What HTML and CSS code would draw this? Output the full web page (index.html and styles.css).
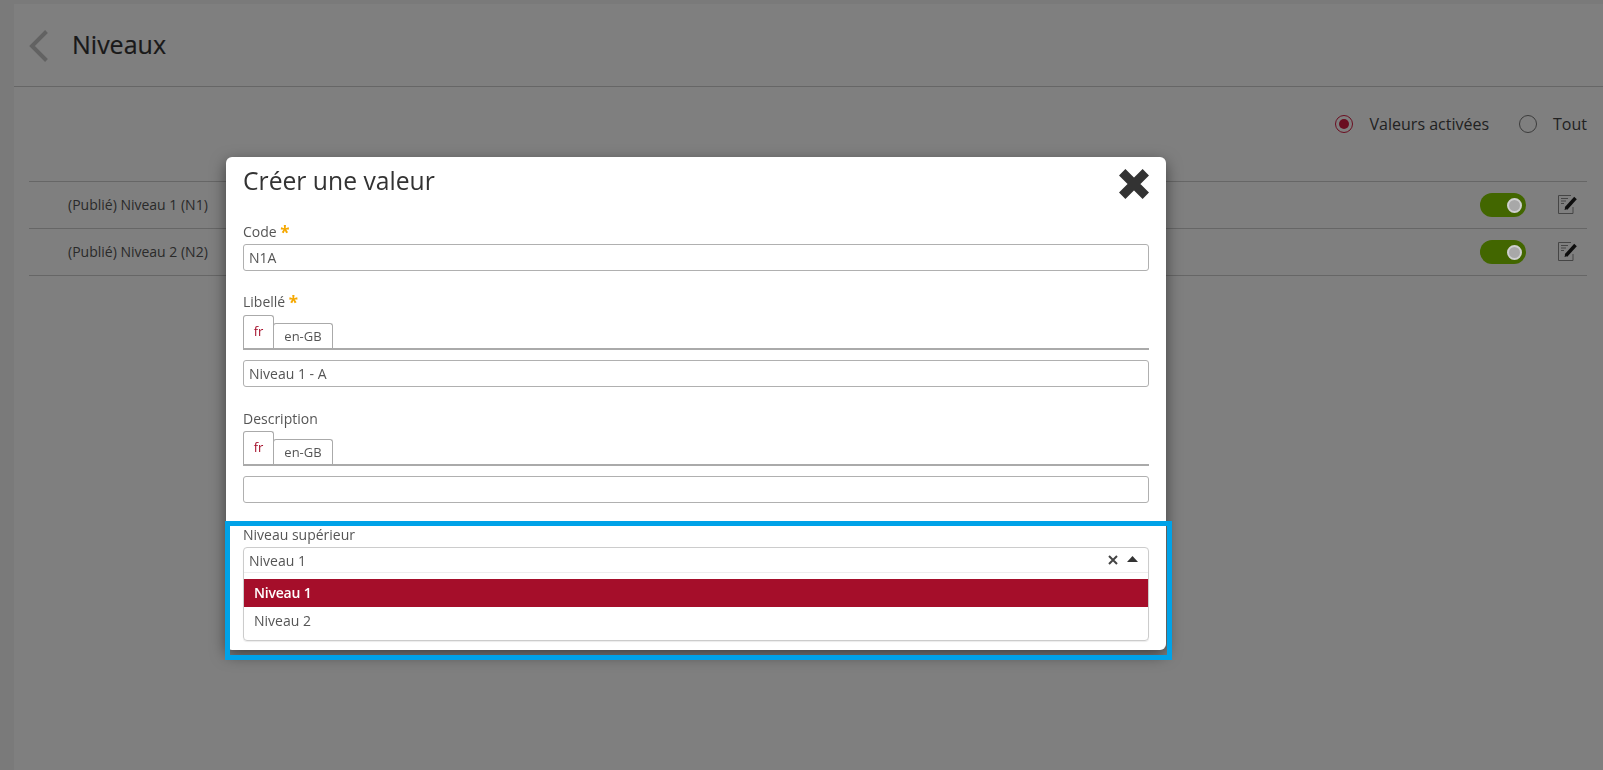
FILE: index.html
```html
<!DOCTYPE html>
<html lang="fr">
<head>
<meta charset="utf-8">
<title>Niveaux</title>
<link rel="stylesheet" href="styles.css">
</head>
<body>
<div class="page">
  <header class="header">
    <svg class="back" width="20" height="32" viewBox="0 0 20 32"><path d="M17.500 1.500 L3 16 L17.500 30.500" fill="none" stroke="#c4c4c4" stroke-width="4"/></svg>
    <h1 class="title">Niveaux</h1>
  </header>
  <main class="content">
    <div class="filters">
      <span class="radio radio-on"></span><span class="radio-label">Valeurs activées</span>
      <span class="radio"></span><span class="radio-label">Tout</span>
    </div>
    <div class="row">
      <span class="row-text">(Publié) Niveau 1 (N1)</span>
      <span class="toggle"><span class="knob"></span></span>
      <svg class="edit" width="20" height="20" viewBox="0 0 20 20"><path d="M15 12v6.500H.5V.5H13" fill="none" stroke="#8a8a8a" stroke-width="1"/><path d="M3 3.500h7M3 6h5M3 8.500h3" stroke="#8a8a8a" stroke-width="1"/><path d="M8 13.500L17.500 3" stroke="#1c1c1c" stroke-width="3.500"/><path d="M6.500 15l.8-3 2.200 2z" fill="#1c1c1c"/></svg>
    </div>
    <div class="row">
      <span class="row-text">(Publié) Niveau 2 (N2)</span>
      <span class="toggle"><span class="knob"></span></span>
      <svg class="edit" width="20" height="20" viewBox="0 0 20 20"><path d="M15 12v6.500H.5V.5H13" fill="none" stroke="#8a8a8a" stroke-width="1"/><path d="M3 3.500h7M3 6h5M3 8.500h3" stroke="#8a8a8a" stroke-width="1"/><path d="M8 13.500L17.500 3" stroke="#1c1c1c" stroke-width="3.500"/><path d="M6.500 15l.8-3 2.200 2z" fill="#1c1c1c"/></svg>
    </div>
  </main>
</div>

<div class="backdrop"></div>

<section class="modal">
  <div class="modal-head">
    <h2 class="modal-title">Créer une valeur</h2>
    <svg class="close" width="30" height="30" viewBox="0 0 30 30"><path d="M3.200 3.200L26.800 26.800M26.800 3.200L3.200 26.800" stroke="#333" stroke-width="9"/></svg>
  </div>

  <div class="field field-code">
    <div class="label">Code <span class="req">*</span></div>
    <div class="input">N1A</div>
  </div>

  <div class="field field-lib">
    <div class="label">Libellé <span class="req">*</span></div>
    <div class="tabs"><span class="tab tab-active">fr</span><span class="tab">en-GB</span></div>
    <div class="input">Niveau 1 - A</div>
  </div>

  <div class="field field-desc">
    <div class="label">Description</div>
    <div class="tabs"><span class="tab tab-active">fr</span><span class="tab">en-GB</span></div>
    <div class="input"></div>
  </div>

  <div class="field field-sup">
    <div class="label">Niveau supérieur</div>
    <div class="select">
      <div class="select-head">
        <span class="select-value">Niveau 1</span>
        <svg width="10" height="10" viewBox="0 0 10 10"><path d="M1 1l8 8M9 1L1 9" stroke="#444" stroke-width="2"/></svg>
        <svg class="caret" width="11" height="6" viewBox="0 0 11 6"><path d="M5.500 0L11 6H0z" fill="#333"/></svg>
      </div>
      <div class="option option-on">Niveau 1</div>
      <div class="option">Niveau 2</div>
    </div>
  </div>
  <div class="highlight"></div>
</section>
</body>
</html>
```

FILE: styles.css
```css
* { box-sizing: border-box; }
html, body { margin: 0; height: 100%; overflow: hidden; }
body {
  background: #f4f4f4;
  font-family: "Open Sans", sans-serif;
  color: #333;
  padding: 4px 0 0 14px;
}
.page { background: #fff; height: 766px; }
.header {
  height: 83px;
  border-bottom: 1px solid #ccc;
  display: flex;
  align-items: center;
  padding-left: 15px;
}
.back { margin-right: 23px; margin-top: 1px; }
.title {
  font-size: 25px;
  font-weight: 400;
  color: #333;
  margin: 0 0 2px;
  -webkit-text-stroke: 0.2px #333;
}
.content { padding: 0 16px 0 15px; }
.filters {
  display: flex;
  align-items: center;
  justify-content: flex-end;
  height: 40px;
  margin-top: 17px;
  font-size: 16px;
}
.radio {
  width: 18px;
  height: 18px;
  border: 1px solid #777;
  border-radius: 50%;
  margin-right: 16px;
  position: relative;
  background: #fff;
}
.radio-on { border-color: #d41a40; margin-right: 17px; }
.radio-on::after {
  content: "";
  position: absolute;
  inset: 3px;
  border-radius: 50%;
  background: #d41a40;
}
.radio-label { margin-right: 30px; color: #444; }
.radio-label:last-child { margin-right: 0; }
.row {
  height: 47px;
  border-top: 1px solid #ccc;
  display: flex;
  align-items: center;
  font-size: 14px;
  padding-left: 39px;
  padding-right: 9px;
  color: #555;
}
.filters + .row { margin-top: 37px; }
.row:last-child { height: 48px; border-bottom: 1px solid #ccc; }
.row-text { flex: 1; margin-bottom: 2px; }
.toggle {
  width: 46px;
  height: 24px;
  background: #84cc00;
  border-radius: 12px;
  position: relative;
  margin-right: 32px;
}
.knob {
  position: absolute;
  z-index: 2;
  right: 4px;
  top: 4.500px;
  width: 15px;
  height: 15px;
  background: #a8a8a8;
  border: 2px solid #cfcfcf;
  border-radius: 50%;
}
.backdrop {
  position: fixed;
  z-index: 1;
  inset: 0;
  background: rgba(0, 0, 0, 0.5);
}
.modal {
  position: absolute;
  z-index: 3;
  left: 226px;
  top: 157px;
  width: 940px;
  height: 493px;
  background: #fff;
  border-radius: 6px;
  box-shadow: 0 5px 15px rgba(0, 0, 0, 0.5);
  padding: 0 16px 0 17px;
}
.modal-head {
  display: flex;
  justify-content: space-between;
  align-items: flex-start;
  height: 62px;
}
.modal-title {
  margin: 6px 0 0;
  font-size: 24.700px;
  line-height: 36px;
  font-weight: 400;
  color: #333;
}
.close { margin-top: 12px; margin-right: 1px; }
.label {
  font-size: 14px;
  line-height: 20px;
  color: #555;
}
.req {
  color: #f5a800;
  font-size: 17px;
  font-weight: 700;
  line-height: 14px;
  vertical-align: -2px;
}
.input {
  width: 906px;
  height: 27px;
  border: 1px solid #b0b0b0;
  border-radius: 3px;
  font-size: 14px;
  line-height: 25px;
  padding-left: 5px;
  color: #555;
}
.field-code { margin-bottom: 21px; }
.field-code .label { height: 25px; padding-top: 3px; }
.tabs {
  display: flex;
  align-items: flex-end;
  width: 906px;
  height: 35px;
  border-bottom: 2px solid #aaa;
  margin-bottom: 10px;
}
.tab {
  font-size: 13px;
  width: 60px;
  height: 25px;
  line-height: 25px;
  text-align: center;
  border: 1px solid #aaa;
  border-bottom: 0;
  border-radius: 3px 3px 0 0;
  color: #555;
}
.tab-active {
  width: 31px;
  height: 33px;
  line-height: 31px;
  color: #a50e2a;
  margin-right: -1px;
}
.field-lib { margin-bottom: 22px; }
.field-desc { margin-bottom: 22px; }
.field-lib .label { height: 23px; }
.field-desc .label { height: 22px; }
.field-sup .label { height: 22px; }
.select {
  width: 906px;
  height: 94px;
  border: 1px solid #ccc;
  border-radius: 4px;
  box-shadow: 0 1px 1px rgba(0, 0, 0, 0.08);
  overflow: hidden;
}
.select-head {
  height: 25px;
  border-bottom: 1px solid #eee;
  display: flex;
  align-items: center;
  padding: 0 10px 0 5px;
  font-size: 14px;
  color: #555;
  gap: 9px;
  margin-bottom: 6px;
}
.select-value { flex: 1; }
.caret { margin-top: -2px; }
.option {
  height: 28px;
  line-height: 28px;
  padding-left: 10px;
  font-size: 14px;
  color: #555;
}
.option-on {
  background: #a50e2a;
  color: #fff;
  font-weight: 600;
  letter-spacing: -0.2px;
}
.highlight {
  position: absolute;
  left: -1px;
  top: 364px;
  width: 947px;
  height: 139px;
  border: 5px solid #00a2e8;
  pointer-events: none;
}
```
